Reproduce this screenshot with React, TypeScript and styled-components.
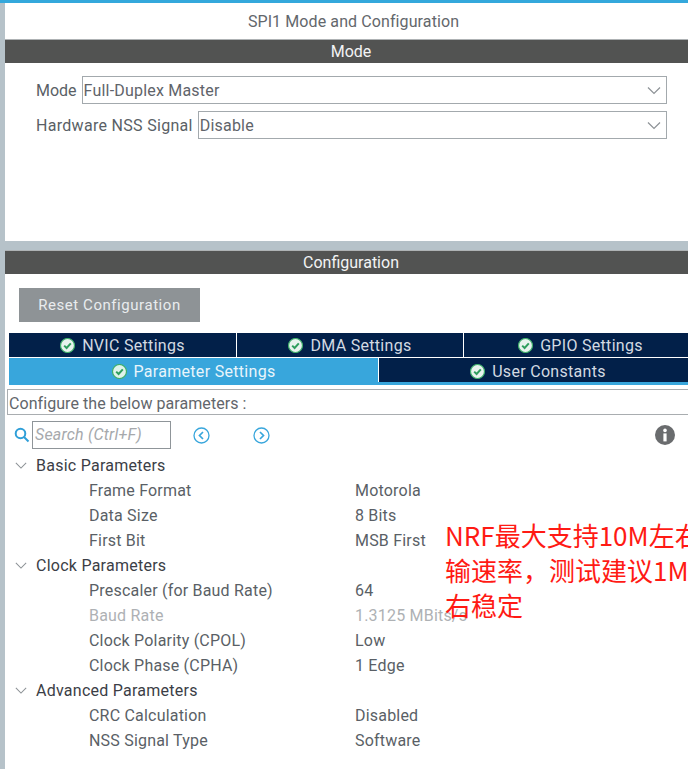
import styled, { createGlobalStyle } from "styled-components";

const GlobalStyle = createGlobalStyle`
    html, body {
        margin: 0;
        padding: 0;
        background: #fff;
    }
`

const Page = styled.div`
    position: relative;
    width: 688px;
    height: 769px;
    overflow: hidden;
    box-sizing: border-box;
    border-top: 3px solid #34a8dc;
    padding-left: 5px;
    background: #b6c2c9;
    font-family: Roboto, "Liberation Sans", sans-serif;
    font-size: 16px;
    letter-spacing: 0.2px;
    color: #5a5f66;
`

const Panel = styled.section`
    background: #fff;
    display: flex;
    flex-direction: column;
`
const ModePanel = styled(Panel)`height: 238px;`
const ConfigPanel = styled(Panel)`
    margin-top: 9px;
    height: 519px;
`

const PanelTitle = styled.div`
    height: 36px;
    line-height: 37px;
    padding-left: 14px;
    text-align: center;
    letter-spacing: 0.1px;
    color: #63676c;
`

const SectionBar = styled.div`
    height: 24px;
    line-height: 23px;
    flex: none;
    box-sizing: border-box;
    padding-left: 9px;
    text-align: center;
    background: #525352;
    border-top: 1px solid #aeb2b4;
    color: #f2f4f5;
    letter-spacing: 0;
`

const ModeForm = styled.div`
    display: flex;
    flex-direction: column;
    gap: 7px;
    padding: 13px 21px 0 31px;
`

const ModeRow = styled.div`
    display: flex;
    align-items: center;
    gap: 5px;
    height: 28px;
`

const ModeLabel = styled.span<{ $spacing: number }>`
    letter-spacing: ${props => props.$spacing}px;
`

const SelectBox = styled.div`
    flex: 1;
    height: 28px;
    box-sizing: border-box;
    padding: 0 5px 0 1px;
    border: 1px solid #a3a9ad;
    display: flex;
    align-items: center;
    justify-content: space-between;
    color: #5f646a;
`

const ResetButton = styled.button`
    align-self: flex-start;
    width: 181px;
    height: 34px;
    margin: 14px 0 0 14px;
    border: none;
    padding: 0;
    background: #8e9396;
    color: #e9ecee;
    font-family: inherit;
    font-size: 15px;
    letter-spacing: 0.55px;
`

const TabRow = styled.div<{ $top: number; $height: number; $columns: string; $nudge: number }>`
    display: grid;
    grid-template-columns: ${props => props.$columns};
    column-gap: 1px;
    height: ${props => props.$height}px;
    margin-top: ${props => props.$top}px;
    margin-left: 4px;
    padding-top: 0;

    & > div {
        padding-top: ${props => props.$nudge}px;
    }
`

const Tab = styled.div<{ $active?: boolean }>`
    display: flex;
    align-items: center;
    justify-content: center;
    gap: 7px;
    background: ${props => props.$active ? "#38a6dc" : "#022049"};
    color: ${props => props.$active ? "#e8f5fb" : "#d3dae2"};
    letter-spacing: 0.3px;
`

const TabUnderline = styled.div`
    height: 3px;
    background: #38a6dc;
    margin-top: -3px;
    margin-left: 4px;
    flex: none;
`

const ConfigureBox = styled.div`
    height: 26px;
    line-height: 25px;
    box-sizing: border-box;
    margin: 4px 0 0 2px;
    padding: 1px 0 0 1px;
    border: 1px solid #a9adb0;
    border-right: none;
    color: #62666b;
    letter-spacing: 0.06px;
    flex: none;
`

const SearchRow = styled.div`
    display: flex;
    align-items: center;
    height: 28px;
    margin-top: 6px;
    padding-left: 9px;
    flex: none;
`

const SearchInput = styled.div`
    width: 139px;
    height: 28px;
    box-sizing: border-box;
    margin-left: 2px;
    padding-left: 2px;
    line-height: 26px;
    border: 1px solid #8f9599;
    color: #a6a9ac;
    font-style: italic;
`

const NavButton = styled.span<{ $gap: number }>`
    display: flex;
    margin-left: ${props => props.$gap}px;
`

const InfoButton = styled.span`
    display: flex;
    margin-left: auto;
    margin-right: 13px;
`

const Tree = styled.div`
    display: flex;
    flex-direction: column;
    margin-top: 4px;
`

const GroupRow = styled.div`
    display: flex;
    align-items: center;
    height: 25px;
    padding-left: 10px;
    gap: 9px;
    color: #3b3e46;
    letter-spacing: 0.25px;
`

const ParamRow = styled.div<{ $muted?: boolean }>`
    display: grid;
    grid-template-columns: 266px 1fr;
    height: 25px;
    line-height: 25px;
    padding-left: 84px;
    color: ${props => props.$muted ? "#aeb1b4" : "#5a5f66"};
`

const Annotation = styled.div`
    position: absolute;
    left: 445px;
    top: 514px;
    white-space: nowrap;
    color: #ff1a14;
    font-family: "Noto Sans CJK SC", "Liberation Sans", sans-serif;
    font-size: 26px;
    line-height: 35px;
    letter-spacing: 0;
`

const Chevron = (props: { size?: number; color?: string }) => (
    <svg width={props.size ?? 14} height="9" viewBox="0 0 14 9" fill="none" stroke={props.color ?? "#8d9296"} strokeWidth="1.2">
        <path d="M1 1.5 7 7.5 13 1.5" />
    </svg>
)

const CheckBadge = (props: { active?: boolean }) => (
    <svg width="15" height="15" viewBox="0 0 15 15">
        <circle cx="7.5" cy="7.5" r="7" fill={props.active ? "#dff3ea" : "#e8f3ee"} stroke="#3fae6b" strokeWidth="1.2" />
        <path d="M4.2 7.6 6.6 10 10.8 5.4" fill="none" stroke="#2f9e5e" strokeWidth="2" />
    </svg>
)

const NavCircle = (props: { dir: "left" | "right" }) => (
    <svg width="17" height="17" viewBox="0 0 17 17" fill="none" stroke="#38a6dc">
        <circle cx="8.5" cy="8.5" r="7.5" strokeWidth="1.3" />
        <path d={props.dir === "left" ? "M10 5 6.5 8.5 10 12" : "M7 5 10.5 8.5 7 12"} strokeWidth="1.7" />
    </svg>
)

const tree = [
    {
        name: "Basic Parameters",
        params: [
            ["Frame Format", "Motorola"],
            ["Data Size", "8 Bits"],
            ["First Bit", "MSB First"],
        ],
    },
    {
        name: "Clock Parameters",
        params: [
            ["Prescaler (for Baud Rate)", "64"],
            ["Baud Rate", "1.3125 MBits/s"],
            ["Clock Polarity (CPOL)", "Low"],
            ["Clock Phase (CPHA)", "1 Edge"],
        ],
    },
    {
        name: "Advanced Parameters",
        params: [
            ["CRC Calculation", "Disabled"],
            ["NSS Signal Type", "Software"],
        ],
    },
]

const App = () => {
    return (
        <Page>
            <GlobalStyle />
            <ModePanel>
                <PanelTitle>SPI1 Mode and Configuration</PanelTitle>
                <SectionBar>Mode</SectionBar>
                <ModeForm>
                    <ModeRow>
                        <ModeLabel $spacing={0}>Mode</ModeLabel>
                        <SelectBox>Full-Duplex Master<Chevron /></SelectBox>
                    </ModeRow>
                    <ModeRow>
                        <ModeLabel $spacing={0.3}>Hardware NSS Signal</ModeLabel>
                        <SelectBox>Disable<Chevron /></SelectBox>
                    </ModeRow>
                </ModeForm>
            </ModePanel>

            <ConfigPanel>
                <SectionBar>Configuration</SectionBar>
                <ResetButton>Reset Configuration</ResetButton>

                {/* the last tab of each row runs past the right edge */}
                <TabRow $top={11} $height={24} $nudge={1} $columns="227px 226px 233px">
                    <Tab><CheckBadge />NVIC Settings</Tab>
                    <Tab><CheckBadge />DMA Settings</Tab>
                    <Tab><CheckBadge />GPIO Settings</Tab>
                </TabRow>
                <TabRow $top={1} $height={27} $nudge={0} $columns="369px 318px">
                    <Tab $active><CheckBadge active />Parameter Settings</Tab>
                    <Tab><CheckBadge />User Constants</Tab>
                </TabRow>
                <TabUnderline />

                <ConfigureBox>Configure the below parameters :</ConfigureBox>

                <SearchRow>
                    <svg width="16" height="16" viewBox="0 0 16 16" fill="none" stroke="#2f9fd8" strokeWidth="2">
                        <circle cx="6.5" cy="6.5" r="4.8" />
                        <path d="M10 10 14.5 14.5" />
                    </svg>
                    <SearchInput>Search (Ctrl+F)</SearchInput>
                    <NavButton $gap={22}><NavCircle dir="left" /></NavButton>
                    <NavButton $gap={43}><NavCircle dir="right" /></NavButton>
                    <InfoButton>
                        <svg width="20" height="20" viewBox="0 0 20 20">
                            <circle cx="10" cy="10" r="10" fill="#6a6c6e" />
                            <rect x="8.4" y="8.4" width="3.2" height="8" fill="#fff" />
                            <circle cx="10" cy="5.4" r="1.8" fill="#fff" />
                        </svg>
                    </InfoButton>
                </SearchRow>

                <Tree>
                    {tree.map(group => (
                        <div key={group.name}>
                            <GroupRow><Chevron size={12} />{group.name}</GroupRow>
                            {group.params.map(([label, value]) => (
                                <ParamRow key={label} $muted={label === "Baud Rate"}>
                                    <span>{label}</span>
                                    <span>{value}</span>
                                </ParamRow>
                            ))}
                        </div>
                    ))}
                </Tree>
            </ConfigPanel>

            <Annotation>
                NRF最大支持10M左右传<br />
                输速率，测试建议1M左<br />
                右稳定
            </Annotation>
        </Page>
    );
}

export default App;
